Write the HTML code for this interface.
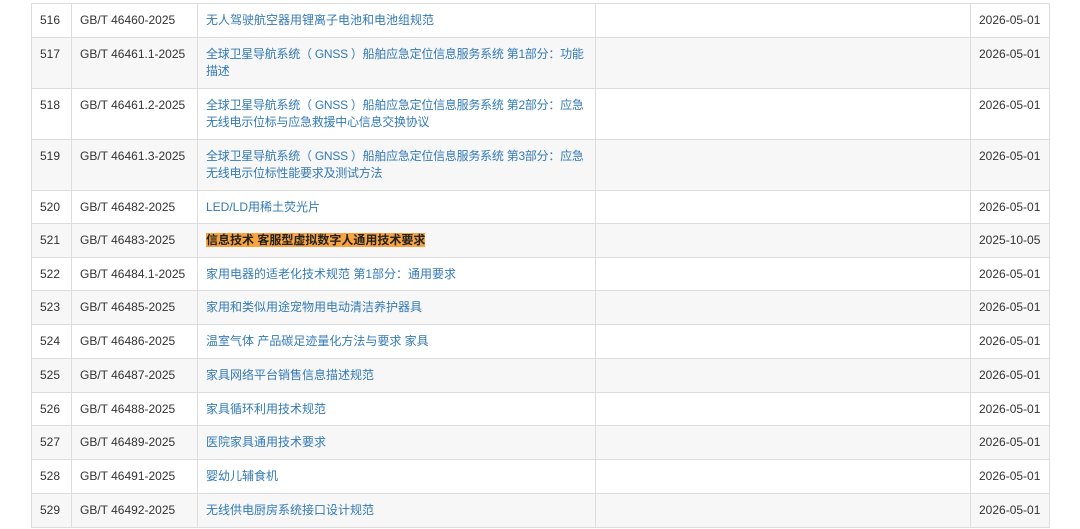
<!DOCTYPE html><html><head><meta charset="utf-8"><style>
body{margin:0;background:#fff;width:1080px;height:529px;overflow:hidden;font-family:"Liberation Sans","Noto Sans CJK SC",sans-serif;font-size:12px;color:#333}
table{position:absolute;left:31px;top:3px;border-collapse:collapse;width:1018px;table-layout:fixed}
td{border:1px solid #ddd;padding:8px 8px 0 8px;line-height:17px;vertical-align:top;white-space:nowrap;overflow:hidden}
tr.g td{background:#f7f7f7}
a{color:#337ab7;text-decoration:none}
.n{letter-spacing:-0.25px}
.h{background:#f7a440;color:#222;font-weight:bold}
</style></head><body>
<table>
<col style="width:40px"><col style="width:126px"><col style="width:398px"><col style="width:375px"><col style="width:79px">
<tr style="height:34px"><td>516</td><td>GB/T 46460-2025</td><td><a>无人驾驶航空器用锂离子电池和电池组规范</a></td><td></td><td>2026-05-01</td></tr>
<tr class="g" style="height:51px"><td>517</td><td>GB/T 46461.1-2025</td><td><a class="n">全球卫星导航系统（ GNSS ）船舶应急定位信息服务系统 第1部分：功能<br>描述</a></td><td></td><td>2026-05-01</td></tr>
<tr style="height:51px"><td>518</td><td>GB/T 46461.2-2025</td><td><a class="n">全球卫星导航系统（ GNSS ）船舶应急定位信息服务系统 第2部分：应急<br>无线电示位标与应急救援中心信息交换协议</a></td><td></td><td>2026-05-01</td></tr>
<tr class="g" style="height:51px"><td>519</td><td>GB/T 46461.3-2025</td><td><a class="n">全球卫星导航系统（ GNSS ）船舶应急定位信息服务系统 第3部分：应急<br>无线电示位标性能要求及测试方法</a></td><td></td><td>2026-05-01</td></tr>
<tr style="height:33px"><td>520</td><td>GB/T 46482-2025</td><td><a>LED/LD用稀土荧光片</a></td><td></td><td>2026-05-01</td></tr>
<tr class="g" style="height:34px"><td>521</td><td>GB/T 46483-2025</td><td><span class="h">信息技术 客服型虚拟数字人通用技术要求</span></td><td></td><td>2025-10-05</td></tr>
<tr style="height:33px"><td>522</td><td>GB/T 46484.1-2025</td><td><a>家用电器的适老化技术规范 第1部分：通用要求</a></td><td></td><td>2026-05-01</td></tr>
<tr class="g" style="height:34px"><td>523</td><td>GB/T 46485-2025</td><td><a>家用和类似用途宠物用电动清洁养护器具</a></td><td></td><td>2026-05-01</td></tr>
<tr style="height:34px"><td>524</td><td>GB/T 46486-2025</td><td><a>温室气体 产品碳足迹量化方法与要求 家具</a></td><td></td><td>2026-05-01</td></tr>
<tr class="g" style="height:34px"><td>525</td><td>GB/T 46487-2025</td><td><a>家具网络平台销售信息描述规范</a></td><td></td><td>2026-05-01</td></tr>
<tr style="height:33px"><td>526</td><td>GB/T 46488-2025</td><td><a>家具循环利用技术规范</a></td><td></td><td>2026-05-01</td></tr>
<tr class="g" style="height:34px"><td>527</td><td>GB/T 46489-2025</td><td><a>医院家具通用技术要求</a></td><td></td><td>2026-05-01</td></tr>
<tr style="height:34px"><td>528</td><td>GB/T 46491-2025</td><td><a>婴幼儿辅食机</a></td><td></td><td>2026-05-01</td></tr>
<tr class="g" style="height:34px"><td>529</td><td>GB/T 46492-2025</td><td><a>无线供电厨房系统接口设计规范</a></td><td></td><td>2026-05-01</td></tr>
</table>
</body></html>
